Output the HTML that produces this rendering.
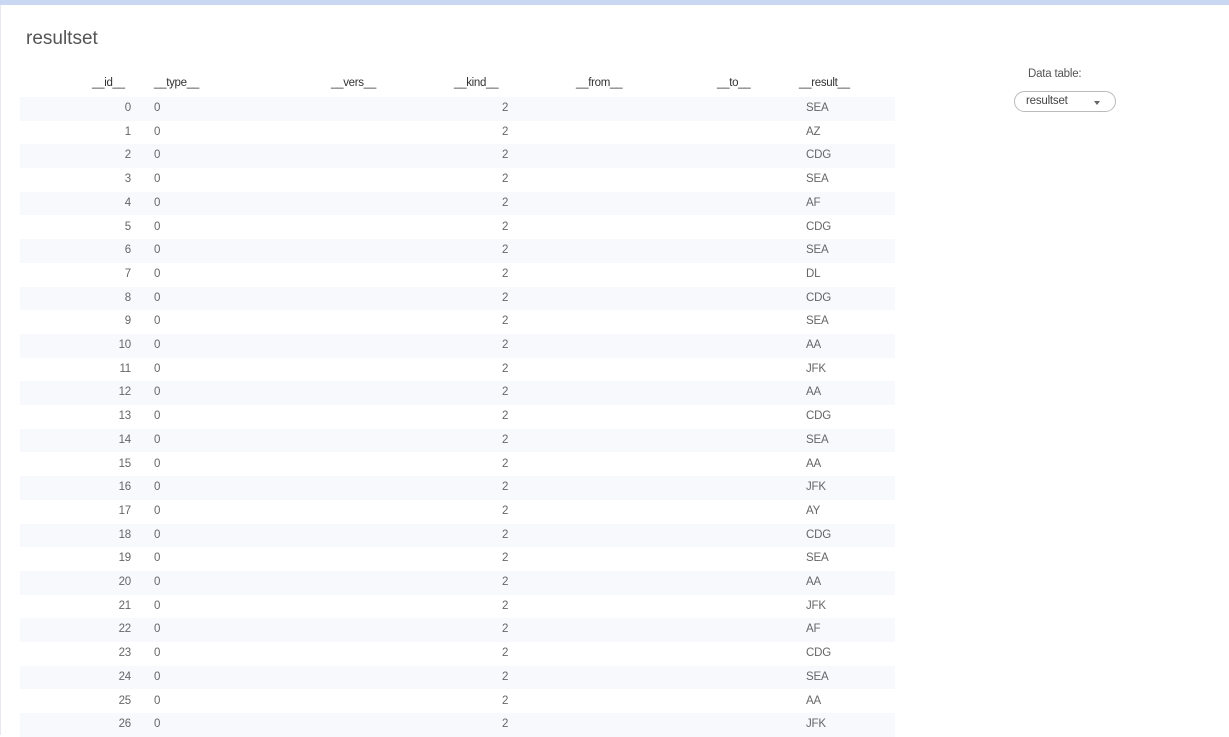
<!DOCTYPE html>
<html><head><meta charset="utf-8"><style>
body{margin:0;width:1229px;height:727px;overflow:hidden;background:#fff;font-family:"Liberation Sans",sans-serif;}
.card{position:absolute;left:0;top:5px;width:1229px;height:730px;background:#fff;border-left:1px solid #e6e9ef;}
.top{position:absolute;left:0;top:0;width:1229px;height:5px;background:#c9d7f3;}
h1{position:absolute;left:26px;top:28px;margin:0;font-weight:normal;font-size:19px;color:#555;}
.t{position:absolute;font-size:11.5px;color:#555;white-space:nowrap;letter-spacing:-0.3px}
.h{color:#333;}
.row{position:absolute;left:20px;width:875px;height:23.7px;font-size:11.5px;color:#666;letter-spacing:-0.2px}
.row.s{background:#f7f9fd;}
.row span{position:absolute;top:5px;}
.id{right:764px;text-align:right;}
.ty{left:134px}
.k{left:482px}
.r{left:786px}
.dl{position:absolute;left:1028px;top:68px;font-size:11.5px;color:#555;letter-spacing:-0.2px}
.sel{position:absolute;left:1014px;top:91px;width:102px;height:21px;border:1px solid #bbb;border-radius:11px;box-sizing:border-box;font-size:11.5px;color:#444;padding:3px 0 0 11px;letter-spacing:-0.2px}
.sel:after{content:"";position:absolute;left:79px;top:9px;border:3px solid transparent;border-top:4px solid #666}
</style></head><body>
<div class="top"></div>
<div class="card"></div>
<h1>resultset</h1>
<div class="t h" style="left:92px;top:77px">__id__</div>
<div class="t h" style="left:154px;top:77px">__type__</div>
<div class="t h" style="left:331px;top:77px">__vers__</div>
<div class="t h" style="left:454px;top:77px">__kind__</div>
<div class="t h" style="left:576px;top:77px">__from__</div>
<div class="t h" style="left:717px;top:77px">__to__</div>
<div class="t h" style="left:799px;top:77px">__result__</div>
<div class="dl">Data table:</div>
<div class="sel">resultset</div>
<div class="row s" style="top:97px"><span class="id">0</span><span class="ty">0</span><span class="k">2</span><span class="r">SEA</span></div>
<div class="row" style="top:120.7px"><span class="id">1</span><span class="ty">0</span><span class="k">2</span><span class="r">AZ</span></div>
<div class="row s" style="top:144.4px"><span class="id">2</span><span class="ty">0</span><span class="k">2</span><span class="r">CDG</span></div>
<div class="row" style="top:168.1px"><span class="id">3</span><span class="ty">0</span><span class="k">2</span><span class="r">SEA</span></div>
<div class="row s" style="top:191.8px"><span class="id">4</span><span class="ty">0</span><span class="k">2</span><span class="r">AF</span></div>
<div class="row" style="top:215.5px"><span class="id">5</span><span class="ty">0</span><span class="k">2</span><span class="r">CDG</span></div>
<div class="row s" style="top:239.2px"><span class="id">6</span><span class="ty">0</span><span class="k">2</span><span class="r">SEA</span></div>
<div class="row" style="top:262.9px"><span class="id">7</span><span class="ty">0</span><span class="k">2</span><span class="r">DL</span></div>
<div class="row s" style="top:286.6px"><span class="id">8</span><span class="ty">0</span><span class="k">2</span><span class="r">CDG</span></div>
<div class="row" style="top:310.3px"><span class="id">9</span><span class="ty">0</span><span class="k">2</span><span class="r">SEA</span></div>
<div class="row s" style="top:334px"><span class="id">10</span><span class="ty">0</span><span class="k">2</span><span class="r">AA</span></div>
<div class="row" style="top:357.7px"><span class="id">11</span><span class="ty">0</span><span class="k">2</span><span class="r">JFK</span></div>
<div class="row s" style="top:381.4px"><span class="id">12</span><span class="ty">0</span><span class="k">2</span><span class="r">AA</span></div>
<div class="row" style="top:405.1px"><span class="id">13</span><span class="ty">0</span><span class="k">2</span><span class="r">CDG</span></div>
<div class="row s" style="top:428.8px"><span class="id">14</span><span class="ty">0</span><span class="k">2</span><span class="r">SEA</span></div>
<div class="row" style="top:452.5px"><span class="id">15</span><span class="ty">0</span><span class="k">2</span><span class="r">AA</span></div>
<div class="row s" style="top:476.2px"><span class="id">16</span><span class="ty">0</span><span class="k">2</span><span class="r">JFK</span></div>
<div class="row" style="top:499.9px"><span class="id">17</span><span class="ty">0</span><span class="k">2</span><span class="r">AY</span></div>
<div class="row s" style="top:523.6px"><span class="id">18</span><span class="ty">0</span><span class="k">2</span><span class="r">CDG</span></div>
<div class="row" style="top:547.3px"><span class="id">19</span><span class="ty">0</span><span class="k">2</span><span class="r">SEA</span></div>
<div class="row s" style="top:571px"><span class="id">20</span><span class="ty">0</span><span class="k">2</span><span class="r">AA</span></div>
<div class="row" style="top:594.7px"><span class="id">21</span><span class="ty">0</span><span class="k">2</span><span class="r">JFK</span></div>
<div class="row s" style="top:618.4px"><span class="id">22</span><span class="ty">0</span><span class="k">2</span><span class="r">AF</span></div>
<div class="row" style="top:642.1px"><span class="id">23</span><span class="ty">0</span><span class="k">2</span><span class="r">CDG</span></div>
<div class="row s" style="top:665.8px"><span class="id">24</span><span class="ty">0</span><span class="k">2</span><span class="r">SEA</span></div>
<div class="row" style="top:689.5px"><span class="id">25</span><span class="ty">0</span><span class="k">2</span><span class="r">AA</span></div>
<div class="row s" style="top:713.2px"><span class="id">26</span><span class="ty">0</span><span class="k">2</span><span class="r">JFK</span></div>
</body></html>
